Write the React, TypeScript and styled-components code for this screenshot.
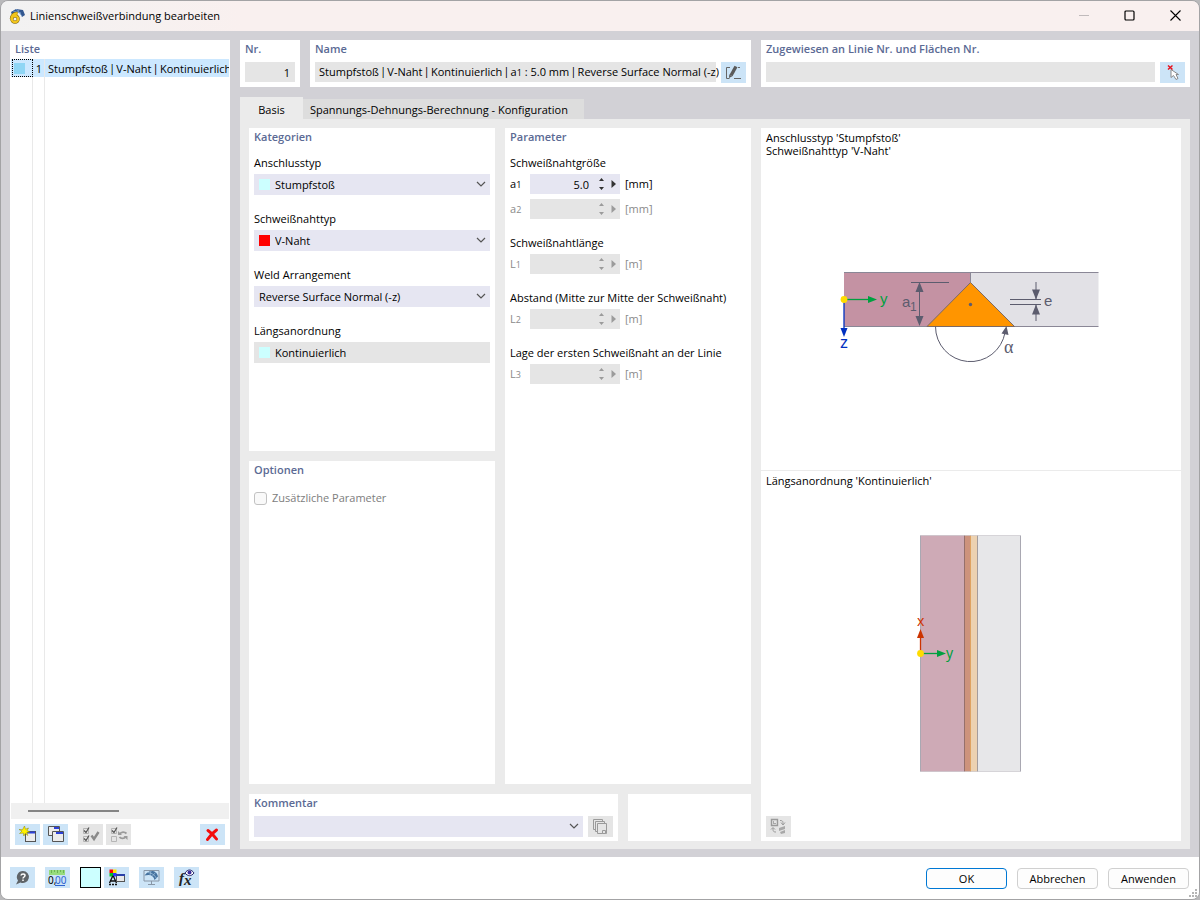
import React from "react";
import styled, { createGlobalStyle } from "styled-components";

const GlobalStyle = createGlobalStyle`
  * { box-sizing: border-box; }
  body {
    margin: 0;
    background: #b9b9bb;
    color: #000;
    font-family: "Open Sans", "Noto Sans", sans-serif;
    font-size: 11px;
    line-height: 16px;
  }
  button, input, select { font: inherit; color: inherit; margin: 0; }
`;

const Window = styled.div`
  display: flex;
  flex-direction: column;
  min-height: 100vh;
  border: 1px solid #a3a3a5;
  border-radius: 8px;
  overflow: hidden;
  background: #d2d1d6;
`;

const TitleBar = styled.header`
  display: flex;
  align-items: center;
  height: 30px;
  padding-left: 8px;
  gap: 5px;
  background: linear-gradient(90deg, #f2f2f2 0, #f9f0ef 240px);
`;

const Title = styled.h1`
  flex: 1;
  margin: 0;
  font-size: 11px;
  font-weight: 400;
`;

const WindowControls = styled.div`
  display: flex;
`;

const WindowButton = styled.button`
  display: grid;
  place-items: center;
  width: 46px;
  height: 30px;
  padding: 0;
  border: 0;
  background: none;
`;

const Body = styled.main`
  flex: 1;
  display: grid;
  grid-template-columns: 220px minmax(0, 1fr);
  gap: 10px;
  padding: 9px 9px 8px;
`;

const Panel = styled.section`
  min-width: 0;
  padding: 0 5px 4px;
  background: #fff;
`;

const Heading = styled.h2`
  margin: 0;
  font-size: 11px;
  line-height: 18px;
  font-weight: 600;
  color: #5b6a94;
`;

const ListPanel = styled.section`
  display: flex;
  flex-direction: column;
  min-width: 0;
  padding: 0 1px;
  background: #fff;
`;

const ListHeading = styled(Heading)`
  padding-left: 4px;
  margin-bottom: 1px;
`;

const ListRow = styled.div<{ $selected?: boolean }>`
  display: grid;
  grid-template-columns: 22px 12px minmax(0, 1fr);
  ${(p) => (p.$selected ? "height: 18px; background: #cce8ff;" : "flex: 1;")}
`;

const ListCell = styled.div<{ $last?: boolean }>`
  border-right: ${(p) => (p.$last ? "0" : "1px solid #e9e9e9")};
  padding-left: ${(p) => (p.$last ? "3px" : "1px")};
  line-height: 19px;
  white-space: nowrap;
  overflow: hidden;
  text-align: ${(p) => (p.$last ? "left" : "center")};
`;

const MarkCell = styled(ListCell)`
  display: flex;
  align-items: center;
  margin-left: 1px;
  border: 1px dotted #000;
`;

const Swatch = styled.span<{ $color: string }>`
  flex: none;
  width: 11px;
  height: 11px;
  background: ${(p) => p.$color};
`;

const ScrollTrack = styled.div`
  height: 16px;
  padding: 7px 17px;
  background: #f0f0f0;
`;

const ScrollThumb = styled.div`
  width: 91px;
  height: 2px;
  background: #858585;
`;

const ListTools = styled.div`
  display: flex;
  gap: 3px;
  padding: 5px 4px 4px;
`;

const Spacer = styled.span<{ $w?: number }>`
  ${(p) => (p.$w ? `width: ${p.$w}px;` : "flex: 1;")}
`;

const ToolButton = styled.button`
  flex: none;
  display: grid;
  place-items: center;
  width: 25px;
  height: 21px;
  padding: 0;
  border: 0;
  background: #cce4f7;
  &:disabled { background: #e5e5e5; }
`;

const Detail = styled.div`
  display: flex;
  flex-direction: column;
  min-width: 0;
`;

const TopRow = styled.div`
  display: grid;
  grid-template-columns: 60px minmax(0, 441fr) minmax(0, 429fr);
  gap: 10px;
`;

const FieldRow = styled.div`
  display: flex;
  gap: 5px;
  margin-top: 4px;
`;

const ReadField = styled.input<{ $right?: boolean }>`
  flex: 1;
  min-width: 0;
  width: 100%;
  height: 20px;
  padding: 0 5px 0 4px;
  border: 0;
  background: #e5e5e5;
  text-align: ${(p) => (p.$right ? "right" : "left")};
`;

const NameOutput = styled.output`
  flex: 1;
  min-width: 0;
  height: 20px;
  padding-left: 4px;
  background: #e5e5e5;
  line-height: 20px;
  white-space: nowrap;
  overflow: clip;
  overflow-clip-margin: 4px;
`;

const Sub = styled.sub`
  font-size: 9px;
  line-height: 1;
  vertical-align: baseline;
`;

const Bar = styled.span`
  font-family: Lato, sans-serif;
  line-height: 1;
  white-space: pre;
`;

const Tabs = styled.div`
  display: flex;
  align-items: flex-end;
  margin-top: 10px;
`;

const Tab = styled.button<{ $active?: boolean }>`
  height: ${(p) => (p.$active ? 22 : 20)}px;
  width: ${(p) => (p.$active ? "63px" : "281px")};
  padding: ${(p) => (p.$active ? "4px 0 0" : "2px 0 0 7px")};
  border: 0;
  background: ${(p) => (p.$active ? "#ebebeb" : "#dddddd")};
  text-align: ${(p) => (p.$active ? "center" : "left")};
`;

const TabPage = styled.div`
  flex: 1;
  display: grid;
  grid-template-columns: minmax(0, 502fr) minmax(0, 420fr);
  gap: 10px;
  padding: 9px 9px 8px;
  background: #ebebeb;
`;

const Left = styled.div`
  display: flex;
  flex-direction: column;
  gap: 10px;
`;

const Settings = styled.div`
  flex: 1;
  display: grid;
  grid-template-columns: repeat(2, minmax(0, 1fr));
  grid-template-rows: repeat(2, minmax(0, 1fr));
  gap: 10px;
`;

const TallPanel = styled(Panel)`
  grid-row: 1 / 3;
  grid-column: 2;
`;

const CommentRow = styled.div`
  display: grid;
  grid-template-columns: minmax(0, 3fr) minmax(0, 1fr);
  gap: 10px;
  height: 47px;
`;

const Groups = styled.div`
  display: grid;
  gap: 16px;
  margin-top: 9px;
`;

const Group = styled.div`
  display: flex;
  flex-direction: column;
`;

const Caption = styled.label`
  margin-bottom: 3px;
  white-space: nowrap;
`;

const SelectBox = styled.div<{ $disabled?: boolean }>`
  flex: 1;
  position: relative;
  display: flex;
  align-items: center;
  height: 21px;
  padding-left: 5px;
  background: ${(p) => (p.$disabled ? "#e5e5e5" : "#e6e6f2")};
`;

const NativeSelect = styled.select<{ $indent?: boolean }>`
  flex: 1;
  width: 100%;
  height: 21px;
  padding: 0 20px 0 ${(p) => (p.$indent ? 5 : 0)}px;
  border: 0;
  appearance: none;
  background: none;
  opacity: 1;
  &:disabled { color: #000; opacity: 1; }
`;

const Chevron = styled.svg`
  position: absolute;
  right: 4px;
  top: 7px;
  pointer-events: none;
`;

const ParamRow = styled.div<{ $off?: boolean }>`
  display: flex;
  align-items: center;
  height: 20px;
  color: ${(p) => (p.$off ? "#8a8a8a" : "#000")};
  & + & { margin-top: 5px; }
`;

const Symbol = styled.label`
  width: 20px;
`;

const Spin = styled.div<{ $off?: boolean }>`
  display: flex;
  align-items: center;
  width: 90px;
  height: 20px;
  margin-right: 5px;
  background: ${(p) => (p.$off ? "#e5e5e5" : "#e6e6f2")};
`;

const SpinInput = styled.input`
  width: 65px;
  height: 20px;
  padding: 0 6px 0 0;
  border: 0;
  background: none;
  text-align: right;
`;

const SpinButton = styled.button`
  display: grid;
  place-items: center;
  width: 12px;
  height: 20px;
  padding: 0;
  border: 0;
  background: none;
`;

const CheckRow = styled.label`
  display: flex;
  align-items: center;
  gap: 5px;
  margin-top: 11px;
  color: #7d7d7d;
`;

const CheckBox = styled.input`
  appearance: none;
  width: 13px;
  height: 13px;
  border: 1px solid #c2c2c2;
  border-radius: 3px;
  background: #f9f9f9;
`;

const Preview = styled.div`
  display: flex;
  flex-direction: column;
  background: #fff;
`;

const PreviewPart = styled.section<{ $grow: number; $line?: boolean }>`
  flex: ${(p) => p.$grow} 1 0;
  display: flex;
  flex-direction: column;
  padding: 3px 5px ${(p) => (p.$line ? 0 : 4)}px;
  line-height: 13px;
  border-bottom: ${(p) => (p.$line ? "1px solid #ebebeb" : "0")};
  p { margin: 0; }
`;

const Figure = styled.div`
  flex: 1;
  display: grid;
  place-items: center;
`;

const Footer = styled.footer`
  display: flex;
  align-items: flex-start;
  height: 42px;
  padding: 10px 10px 0 9px;
  gap: 10px;
  background: #fff;
  position: relative;
`;

const ColorButton = styled.button`
  width: 21px;
  height: 21px;
  padding: 0;
  border: 1px solid #000;
  background: #ccffff;
`;

const ColorTools = styled.div`
  display: flex;
  gap: 3px;
`;

const DialogButton = styled.button<{ $primary?: boolean }>`
  width: 81px;
  height: 21px;
  margin-top: 1px;
  padding: 0;
  border: 1px solid ${(p) => (p.$primary ? "#0078d4" : "#d0d0d0")};
  border-radius: 4px;
  background: #fdfdfd;
`;

const Grip = styled.svg`
  position: absolute;
  right: 2px;
  bottom: 2px;
`;

const DownChevron = () => (
  <Chevron width="10" height="7" viewBox="0 0 10 7" fill="none" stroke="#555" strokeWidth="1.2">
    <path d="M1 1l4 4 4-4" />
  </Chevron>
);

const Separator = () => <Bar>{" | "}</Bar>;

type PickerProps = { id: string; label: string; value: string; color?: string; disabled?: boolean };

const Picker = ({ id, label, value, color, disabled }: PickerProps) => (
  <Group>
    <Caption htmlFor={id}>{label}</Caption>
    <SelectBox $disabled={disabled}>
      {color && <Swatch $color={color} />}
      <NativeSelect id={id} $indent={!!color} disabled={disabled}>
        <option>{value}</option>
      </NativeSelect>
      {!disabled && <DownChevron />}
    </SelectBox>
  </Group>
);

type ParamProps = { letter: string; index: number; unit: string; value?: string };

const Param = ({ letter, index, unit, value }: ParamProps) => {
  const off = value === undefined;
  const ink = off ? "#9b9b9b" : "#333";
  const id = `param-${letter}${index}`;
  return (
    <ParamRow $off={off}>
      <Symbol htmlFor={id}>{letter}<Sub>{index}</Sub></Symbol>
      <Spin $off={off}>
        <SpinInput id={id} defaultValue={value ?? ""} disabled={off} />
        <SpinButton disabled={off} aria-label="Wert ändern">
          <svg width="7" height="14" viewBox="0 0 7 14" fill={ink}>
            <path d="M1 4L3.500 1 6 4zM1 10h5L3.500 13z" />
          </svg>
        </SpinButton>
        <SpinButton disabled={off} aria-label="Weitere Optionen">
          <svg width="5" height="8" viewBox="0 0 5 8" fill={ink}><path d="M0.500 0L5 4 0.500 8z" /></svg>
        </SpinButton>
      </Spin>
      {`[${unit}]`}
    </ParamRow>
  );
};

const AppIcon = () => (
  <svg width="16" height="16" viewBox="0 0 16 16">
    <path d="M2 4L7 1l7 1 2 5-3 2-2-4-4-1-4 3z" fill="#33578f" />
    <path d="M4 3l8 2M7 1l6 7M10 2L8 5" stroke="#7fa6d6" strokeWidth="0.8" />
    <path d="M8.500 5.500C5 5 2.500 8 2.500 11" fill="none" stroke="#7a6410" strokeWidth="3.600" />
    <circle cx="6" cy="11" r="3.200" fill="none" stroke="#7a6410" strokeWidth="3.200" />
    <path d="M8.500 5.500C5 5 2.500 8 2.500 11" fill="none" stroke="#f2c51c" strokeWidth="2.400" />
    <circle cx="6" cy="11" r="3.200" fill="none" stroke="#f2c51c" strokeWidth="2.300" />
  </svg>
);

const NewIcon = () => (
  <svg width="18" height="17" viewBox="0 0 18 17">
    <rect x="6.500" y="5.500" width="10" height="10" fill="#ececec" stroke="#555" />
    <path d="M7 6.500h9" stroke="#2b40d8" strokeWidth="2" />
    <path d="M5.500 0l1 3.200L9.500 2l-1.500 2.500 3 1.500-3.200.5 1 3-2.500-2-1.500 2.500-.5-3L.5 7.500 3 5 0 3.500l3.500.2z" fill="#fff200" stroke="#8a8500" strokeWidth="0.500" />
  </svg>
);

const CopyIcon = () => (
  <svg width="18" height="17" viewBox="0 0 18 17">
    <g fill="#ececec" stroke="#555">
      <path d="M1.500 .5h11v9h-11z" />
      <path d="M7 2h5" stroke="#2b40d8" strokeWidth="2" />
      <path d="M5.500 5.500h11v10h-11z" />
      <path d="M9 7h7" stroke="#2b40d8" strokeWidth="2" />
    </g>
  </svg>
);

const CheckListIcon = () => (
  <svg width="18" height="16" viewBox="0 0 18 16" fill="none">
    <path d="M1.500 1.500h5v5h-5zM1.500 9.500h5v5h-5z" stroke="#b5b5b5" />
    <path d="M2 3.500l2 2 3-5M2 11.500l2 2 3-5" stroke="#555" strokeWidth="1.200" />
    <path d="M9.500 8.500l2.500 3.500 4.500-7" stroke="#8a8a8a" strokeWidth="2.400" />
  </svg>
);

const ToggleListIcon = () => (
  <svg width="18" height="16" viewBox="0 0 18 16" fill="none">
    <path d="M1.500 1.500h5v5h-5zM1.500 9.500h5v5h-5z" stroke="#b5b5b5" />
    <path d="M2 3.500l2 2 3-5" stroke="#555" strokeWidth="1.200" />
    <path d="M9.500 7c2-2.500 5-2.500 7-.5M16 9.500c-2 2.500-5 2.500-6.500.5" stroke="#9a9a9a" strokeWidth="1.800" />
    <path d="M8 4v4h4zM17.500 13V9h-4z" fill="#9a9a9a" />
  </svg>
);

const DeleteIcon = () => (
  <svg width="15" height="14" viewBox="0 0 15 14" fill="none" stroke="#f30d0d" strokeWidth="3" strokeLinecap="round">
    <path d="M3 2.500c3 2 6 5 8.500 8.500M11.500 2C8 4.500 5 7.500 2.500 11.500" />
  </svg>
);

const RenameIcon = () => (
  <svg width="17" height="15" viewBox="0 0 17 15" fill="none" stroke="#666">
    <path d="M5 2.500H1.500v11h3M13 2.500h2M9 13.500h7" />
    <path d="M6 10.500L11 1.500" stroke="#5a5a5a" strokeWidth="3.400" />
    <path d="M4 13l.3-3.500 3 1.800z" fill="#5a5a5a" stroke="none" />
  </svg>
);

const PickIcon = () => (
  <svg width="16" height="17" viewBox="0 0 16 17">
    <path d="M6 5.500v8l2.500-2 2.500 4 2-1-2-4h2.500z" fill="#fff" stroke="#8a8a8a" />
    <path d="M3 1.500l4.500 4M7.500 1.500l-4.500 4" stroke="#e8101c" strokeWidth="1.500" />
  </svg>
);

const LibraryIcon = () => (
  <svg width="17" height="16" viewBox="0 0 17 16" fill="#e5e5e5" stroke="#9a9a9a">
    <path d="M1.500 .5h9v10h-9z" /><path d="M3.500 2.500h9v10h-9z" /><path d="M5.500 4.500h9v10h-9z" />
    <path d="M10.500 11.500h3v3h-3z" />
  </svg>
);

const SwapIcon = () => (
  <svg width="18" height="17" viewBox="0 0 18 17" fill="none" stroke="#9a9a9a">
    <path d="M1.500 1.500h6v6h-6z" strokeWidth="1.400" />
    <path d="M3 3h1v2h2v1H3z" fill="#a8a8a8" stroke="none" />
    <path d="M10 2.500c3 0 3 1 3 4M11 4.500l2 2.500 2-2.500M6 14c-3 0-3-1-3-4M1 11.500l2-2 2 2" />
    <path d="M9 10l6-2v3l-6 2zM10 14l5-2v3l-4 1z" fill="#a8a8a8" stroke="none" />
  </svg>
);

const HelpIcon = () => (
  <svg width="17" height="16" viewBox="0 0 17 16">
    <path d="M9 1a6 6 0 1 1-2.500 11.500L2 14.500l2-4A6 6 0 0 1 9 1z" fill="#5f6468" />
    <path d="M7 5.500c.3-2 4-2 4 0C11 7 9 7 9 8.500M9 9.500v1.500" fill="none" stroke="#fff" strokeWidth="1.500" />
  </svg>
);

const UnitsIcon = () => (
  <svg width="19" height="18" viewBox="0 0 19 18">
    <rect x="1" y="1" width="16" height="5" fill="#97dc7c" />
    <path d="M3.500 1v3M6.500 1v2M9.500 1v3M12.500 1v2M15.500 1v3" stroke="#6bb454" />
    <g fontFamily="Noto Sans, sans-serif" fontSize="10">
      <text x="0" y="15">0,</text>
      <text x="7" y="15" fill="#2e63d0">00</text>
    </g>
    <path d="M7 16.500h10" stroke="#2e63d0" />
  </svg>
);

const DisplayIcon = () => (
  <svg width="18" height="17" viewBox="0 0 18 17">
    <path d="M1.500 .5h3.500v3.500h-3.500z" fill="#f00" /><path d="M5 .5h3.500v3.500H5z" fill="#ffe600" />
    <path d="M1.500 4h3.500v3.500h-3.500z" fill="#00c020" /><path d="M5 4h3.500v3.500H5z" fill="#33f" />
    <path d="M1.500 14L4.500 7.500h1L8.500 14M3 12h4M1 15.500h2M4 15.500h2M7 15.500h2" fill="none" stroke="#111" strokeWidth="1.300" />
    <rect x="8.500" y="5.500" width="8" height="7" fill="#e8e8e8" stroke="#555" />
    <path d="M8 6h9" stroke="#2b40a8" strokeWidth="2" />
  </svg>
);

const ModelIcon = () => (
  <svg width="17" height="17" viewBox="0 0 17 17" fill="none">
    <path d="M1 1.500h15v10.500H1zM8.500 12v3M5 15.500h7" stroke="#8896a6" />
    <path d="M1.500 6.500C4 3 7 1.500 10 2c3 .8 4.500 3 5 5.500l-3.500 3.500C11 8 9 6 5.500 6z" fill="#45729f" />
    <path d="M5 3.500c4 .5 7 2.500 8.500 6M8 2l-1 4M12.500 3.500L9.500 7" stroke="#a5c4de" strokeWidth="0.700" />
  </svg>
);

const FormulaIcon = () => (
  <svg width="19" height="18" viewBox="0 0 19 18">
    <g fontFamily="Liberation Serif, serif" fontStyle="italic" fontWeight="700" fill="#222">
      <text x="2" y="14" fontSize="15">f</text>
      <text x="7" y="16" fontSize="15">x</text>
    </g>
    <path d="M8 4c2.500-4 6.500-4 9 0-2.500 3.500-6.500 3.500-9 0z" fill="#fff" stroke="#28286a" />
    <circle cx="12.500" cy="3.500" r="2" fill="#3a2a9a" />
  </svg>
);

const WeldSection = () => (
  <svg width="280" height="100" viewBox="0 -1 280 100" fontFamily="Liberation Sans, sans-serif" fontSize="15">
    <path d="M13 8.500h126.500v54H13z" fill="#c492a3" />
    <path d="M139.500 8.500h128v54h-128z" fill="#e2e1e6" />
    <path d="M13 8.500h254.500M13 62.500h254.500M139.500 8.500v10" stroke="#8a8796" />
    <path d="M139.500 18.500l44 44h-87.500z" fill="#ff9500" stroke="#7c6a64" />
    <circle cx="139.500" cy="40.500" r="1.700" fill="#5c5c6e" />
    <g stroke="#5c5c6e" fill="none">
      <path d="M80 18.500h38M88.500 20v41" />
      <path d="M179 35.500h31M179 40.500h31M205 18v17M205 41v16" />
      <path d="M104.500 62.500a35 35 0 0 0 69.500 6" />
    </g>
    <g fill="#5c5c6e">
      <path d="M88.500 18l4 10h-8zM88.500 62l4-10h-8zM205 35.500l4-10h-8zM205 40.500l4 10h-8zM175.500 62l2 9-7-1.500z" />
      <text x="71" y="43">a</text>
      <text x="79" y="47" fontSize="12">1</text>
      <text x="213" y="42">e</text>
      <text x="173" y="89" fontFamily="Liberation Serif, serif" fontSize="18">α</text>
    </g>
    <path d="M13 35.500h27" stroke="#00a040" strokeWidth="1.300" />
    <path d="M46 35.500l-9-3.500v7z" fill="#00a040" />
    <text x="49" y="40" fill="#00a040">y</text>
    <path d="M13 36v30" stroke="#0030c0" strokeWidth="1.300" />
    <path d="M13 73l-3.500-9h7z" fill="#0030c0" />
    <text x="9" y="84" fontSize="16" fill="#0030c0">z</text>
    <circle cx="13" cy="35.500" r="3.400" fill="#ffdc00" />
  </svg>
);

const WeldPlan = () => (
  <svg width="200" height="244" viewBox="0 -1 200 244" fontFamily="Noto Sans, sans-serif" fontSize="14">
    <path d="M49.500 5.500h44v236h-44z" fill="#ceaab6" />
    <path d="M93.500 5.500h6v236h-6z" fill="#cd937d" />
    <path d="M99.500 5.500h7v236h-7z" fill="#ecd1b0" />
    <path d="M106.500 5.500h43v236h-43z" fill="#e7e7e9" />
    <path d="M49.500 5.500v236M149.500 5.500v236" stroke="#a9a8b2" />
    <path d="M93.500 5.500v236" stroke="#96706c" />
    <path d="M99.500 5.500v236" stroke="#dfa260" />
    <path d="M106.500 5.500v236" stroke="#a39c9c" />
    <path d="M49.500 5.500h100M49.500 241.500h100" stroke="#b9b4bc" strokeWidth="0.500" />
    <path d="M49.500 123v-18" stroke="#cc3300" strokeWidth="1.300" />
    <path d="M49.500 99l3.500 9h-7z" fill="#cc3300" />
    <path d="M50 123.500h18" stroke="#00a040" strokeWidth="1.300" />
    <path d="M75 123.500l-9-3.500v7z" fill="#00a040" />
    <text x="46" y="96" fill="#cc3300">x</text>
    <text x="75" y="128" fill="#00a040">y</text>
    <circle cx="49.500" cy="123.500" r="3.400" fill="#ffdc00" />
  </svg>
);

export default function App() {
  return (
    <>
      <GlobalStyle />
      <Window>
        <TitleBar>
          <AppIcon />
          <Title>Linienschweißverbindung bearbeiten</Title>
          <WindowControls>
            <WindowButton aria-label="Minimieren" disabled>
              <svg width="10" height="10"><path d="M0 4.500h10" stroke="#c0babb" /></svg>
            </WindowButton>
            <WindowButton aria-label="Maximieren">
              <svg width="12" height="12"><rect x="1" y="1" width="9" height="9" rx="1" fill="none" stroke="#000" strokeWidth="1.200" /></svg>
            </WindowButton>
            <WindowButton aria-label="Schließen">
              <svg width="12" height="12"><path d="M.5 .5l10 10M10.500 .5l-10 10" stroke="#000" strokeWidth="1.100" /></svg>
            </WindowButton>
          </WindowControls>
        </TitleBar>

        <Body>
          <ListPanel>
            <ListHeading>Liste</ListHeading>
            <ListRow $selected>
              <MarkCell><Swatch $color="#8fd6f5" /></MarkCell>
              <ListCell>1</ListCell>
              <ListCell $last>Stumpfstoß<Separator />V-Naht<Separator />Kontinuierlich</ListCell>
            </ListRow>
            <ListRow>
              <ListCell /><ListCell /><ListCell $last />
            </ListRow>
            <ScrollTrack><ScrollThumb /></ScrollTrack>
            <ListTools>
              <ToolButton aria-label="Neu"><NewIcon /></ToolButton>
              <ToolButton aria-label="Kopieren"><CopyIcon /></ToolButton>
              <Spacer $w={4} />
              <ToolButton aria-label="Alle auswählen" disabled><CheckListIcon /></ToolButton>
              <ToolButton aria-label="Auswahl umkehren" disabled><ToggleListIcon /></ToolButton>
              <Spacer />
              <ToolButton aria-label="Löschen"><DeleteIcon /></ToolButton>
            </ListTools>
          </ListPanel>

          <Detail>
            <TopRow>
              <Panel>
                <Heading as="label" htmlFor="number">Nr.</Heading>
                <FieldRow><ReadField id="number" $right readOnly value="1" /></FieldRow>
              </Panel>
              <Panel>
                <Heading as="label" htmlFor="name">Name</Heading>
                <FieldRow>
                  <NameOutput id="name">
                    Stumpfstoß<Separator />V-Naht<Separator />Kontinuierlich<Separator />a<Sub>1</Sub> : 5.0 mm<Separator />Reverse Surface Normal (-z)
                  </NameOutput>
                  <ToolButton aria-label="Name bearbeiten"><RenameIcon /></ToolButton>
                </FieldRow>
              </Panel>
              <Panel>
                <Heading as="label" htmlFor="assigned">Zugewiesen an Linie Nr. und Flächen Nr.</Heading>
                <FieldRow>
                  <ReadField id="assigned" readOnly value="" />
                  <ToolButton aria-label="Im Modell wählen"><PickIcon /></ToolButton>
                </FieldRow>
              </Panel>
            </TopRow>

            <Tabs>
              <Tab $active>Basis</Tab>
              <Tab>Spannungs-Dehnungs-Berechnung - Konfiguration</Tab>
            </Tabs>

            <TabPage>
              <Left>
                <Settings>
                  <Panel>
                    <Heading>Kategorien</Heading>
                    <Groups>
                      <Picker id="joint" label="Anschlusstyp" value="Stumpfstoß" color="#ccffff" />
                      <Picker id="weld" label="Schweißnahttyp" value="V-Naht" color="#ff0000" />
                      <Picker id="arrangement" label="Weld Arrangement" value="Reverse Surface Normal (-z)" />
                      <Picker id="longitudinal" label="Längsanordnung" value="Kontinuierlich" color="#ccffff" disabled />
                    </Groups>
                  </Panel>
                  <TallPanel>
                    <Heading>Parameter</Heading>
                    <Groups>
                      <Group>
                        <Caption as="div">Schweißnahtgröße</Caption>
                        <Param letter="a" index={1} unit="mm" value="5.0" />
                        <Param letter="a" index={2} unit="mm" />
                      </Group>
                      <Group>
                        <Caption as="div">Schweißnahtlänge</Caption>
                        <Param letter="L" index={1} unit="m" />
                      </Group>
                      <Group>
                        <Caption as="div">Abstand (Mitte zur Mitte der Schweißnaht)</Caption>
                        <Param letter="L" index={2} unit="m" />
                      </Group>
                      <Group>
                        <Caption as="div">Lage der ersten Schweißnaht an der Linie</Caption>
                        <Param letter="L" index={3} unit="m" />
                      </Group>
                    </Groups>
                  </TallPanel>
                  <Panel>
                    <Heading>Optionen</Heading>
                    <CheckRow><CheckBox type="checkbox" disabled />Zusätzliche Parameter</CheckRow>
                  </Panel>
                </Settings>
                <CommentRow>
                  <Panel>
                    <Heading as="label" htmlFor="comment">Kommentar</Heading>
                    <FieldRow>
                      <SelectBox>
                        <NativeSelect id="comment"><option></option></NativeSelect>
                        <DownChevron />
                      </SelectBox>
                      <ToolButton aria-label="Kommentarvorlagen" disabled><LibraryIcon /></ToolButton>
                    </FieldRow>
                  </Panel>
                  <Panel />
                </CommentRow>
              </Left>

              <Preview>
                <PreviewPart $grow={344} $line>
                  <p>Anschlusstyp 'Stumpfstoß'</p>
                  <p>Schweißnahttyp 'V-Naht'</p>
                  <Figure><WeldSection /></Figure>
                </PreviewPart>
                <PreviewPart $grow={369}>
                  <p>Längsanordnung 'Kontinuierlich'</p>
                  <Figure><WeldPlan /></Figure>
                  <ToolButton aria-label="Ansicht wechseln" disabled><SwapIcon /></ToolButton>
                </PreviewPart>
              </Preview>
            </TabPage>
          </Detail>
        </Body>

        <Footer>
          <ToolButton aria-label="Hilfe"><HelpIcon /></ToolButton>
          <ToolButton aria-label="Einheiten"><UnitsIcon /></ToolButton>
          <ColorTools>
            <ColorButton aria-label="Farbe" />
            <ToolButton aria-label="Darstellung"><DisplayIcon /></ToolButton>
          </ColorTools>
          <ToolButton aria-label="Modellansicht"><ModelIcon /></ToolButton>
          <ToolButton aria-label="Formel"><FormulaIcon /></ToolButton>
          <Spacer />
          <DialogButton $primary>OK</DialogButton>
          <DialogButton>Abbrechen</DialogButton>
          <DialogButton>Anwenden</DialogButton>
          <Grip width="8" height="8" viewBox="0 0 8 8" fill="#b5b5b5">
            <path d="M6 0h2v2H6zM3 3h2v2H3zM6 3h2v2H6zM0 6h2v2H0zM3 6h2v2H3zM6 6h2v2H6z" />
          </Grip>
        </Footer>
      </Window>
    </>
  );
}
